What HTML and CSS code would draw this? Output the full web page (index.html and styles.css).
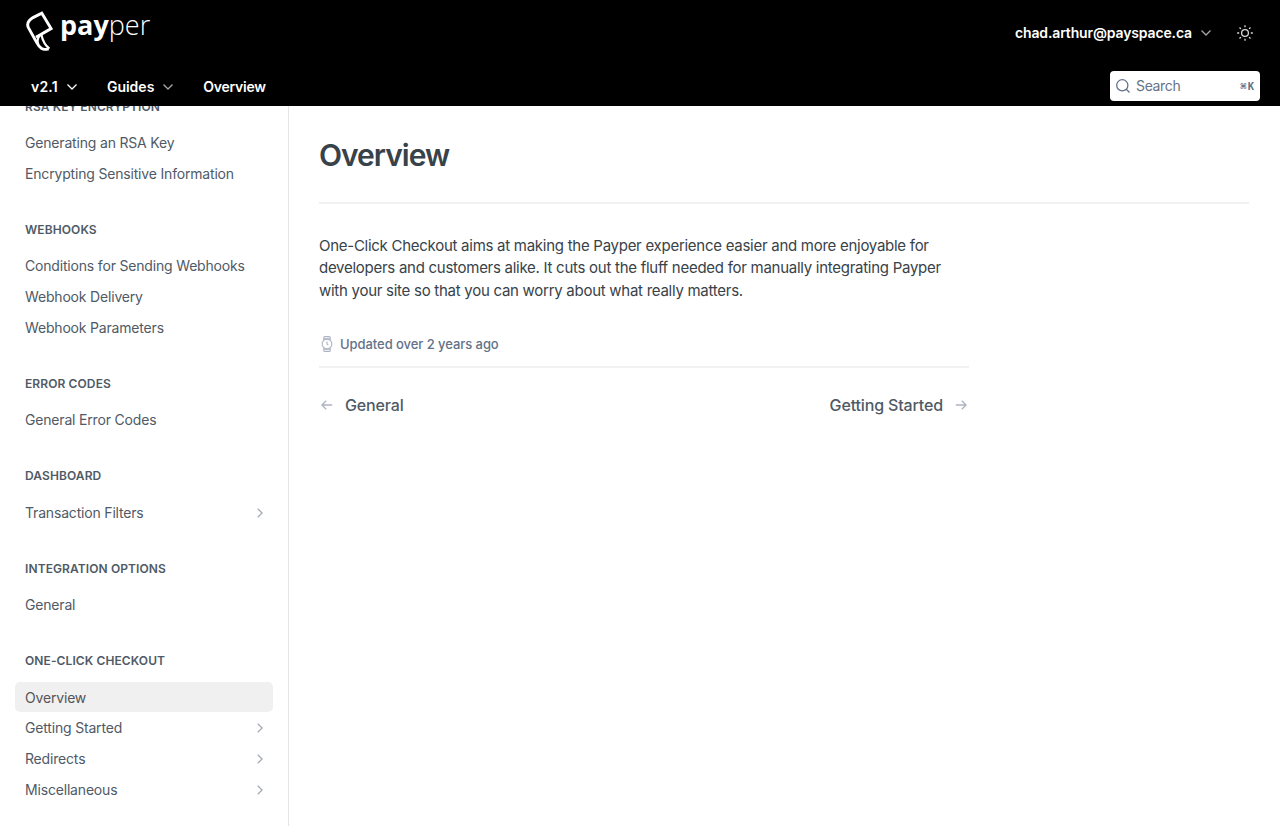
FILE: index.html
```
<!DOCTYPE html>
<html lang="en">
<head>
<meta charset="utf-8">
<title>Overview</title>
<link rel="stylesheet" href="styles.css">
</head>
<body>
<header class="header">
  <div class="top">
    <a class="logo">
      <svg width="28" height="42" viewBox="0 0 28 42" fill="none" stroke="#fff" stroke-width="2.9" stroke-linejoin="miter"><path d="M11 27.2 26.1 18.6 16.8 3.2 8 7.6C3.2 10.6 1.6 14 3.4 17.6L11.6 32.4C15 38.6 17.5 40.6 23.6 38.8"/><path d="M16.4 25C17.6 30 19.4 35 24.4 38.6M14.6 25.6C12.4 28.5 12 31.5 13.4 34.6" stroke-width="2.2"/></svg>
      <span class="wordmark"><b class="pay">pay</b><span class="per">per</span></span>
    </a>
    <div class="account">
      <span class="email">chad.arthur@payspace.ca</span>
      <svg class="chev dim" width="10" height="6" viewBox="0 0 10 6"><path d="m.5.5 4.5 4.5L9.5.5"/></svg>
      <svg class="sun" width="16" height="16" viewBox="0 0 16 16"><circle cx="8" cy="8" r="3.4"/><path d="M8 .2v2M8 13.8v2M.2 8h2M13.8 8h2M2.5 2.5 3.9 3.9M12.1 12.1l1.4 1.4M2.5 13.5l1.4-1.4M12.1 3.9l1.4-1.4"/></svg>
    </div>
  </div>
  <nav class="bar">
    <span class="tab version">v2.1 <svg class="chev" width="10" height="6" viewBox="0 0 10 6"><path d="m.5.5 4.5 4.5L9.5.5"/></svg></span>
    <span class="tab guides">Guides <svg class="chev dim" width="10" height="6" viewBox="0 0 10 6"><path d="m.5.5 4.5 4.5L9.5.5"/></svg></span>
    <span class="tab overview">Overview</span>
    <div class="search">
      <svg width="14" height="14" viewBox="0 0 14 14"><circle cx="6.3" cy="6.3" r="5.6"/><path d="m10.3 10.3 3.2 3.2"/></svg>
      <span class="hint">Search</span><span class="keys"><span class="cmd">⌘</span>K</span>
    </div>
  </nav>
</header>
<div class="page">
  <aside class="sidebar">
    <section class="group"><h2>RSA Key Encryption</h2><a>Generating an RSA Key</a><a>Encrypting Sensitive Information</a></section>
    <section class="group"><h2>Webhooks</h2><a>Conditions for Sending Webhooks</a><a>Webhook Delivery</a><a>Webhook Parameters</a></section>
    <section class="group"><h2>Error Codes</h2><a>General Error Codes</a></section>
    <section class="group"><h2>Dashboard</h2><a>Transaction Filters<svg class="more" width="6" height="10" viewBox="0 0 6 10"><path d="m.7.7L5.1 5 .7 9.3"/></svg></a></section>
    <section class="group"><h2>Integration Options</h2><a>General</a></section>
    <section class="group"><h2>One-Click Checkout</h2><a class="active">Overview</a><a>Getting Started<svg class="more" width="6" height="10" viewBox="0 0 6 10"><path d="m.7.7L5.1 5 .7 9.3"/></svg></a><a>Redirects<svg class="more" width="6" height="10" viewBox="0 0 6 10"><path d="m.7.7L5.1 5 .7 9.3"/></svg></a><a>Miscellaneous<svg class="more" width="6" height="10" viewBox="0 0 6 10"><path d="m.7.7L5.1 5 .7 9.3"/></svg></a></section>
  </aside>
  <main class="main">
    <h1>Overview</h1>
    <article class="article">
      <p>One-Click Checkout aims at making the Payper experience easier and more enjoyable for developers and customers alike. It cuts out the fluff needed for manually integrating Payper with your site so that you can worry about what really matters.</p>
      <div class="updated"><svg width="12" height="16" viewBox="0 0 12 16"><circle cx="6" cy="8" r="4.9"/><path d="M2.8 4V1.6Q2.8.6 3.8.6h4.4q1 0 1 1V4M2.8 12v2.4q0 1 1 1h4.4q1 0 1-1V12M3 2.8h6M3 13.2h6M6 5.5V8l1.3 1.2"/></svg>Updated over 2 years ago</div>
      <div class="pager">
        <a><svg width="12" height="10" viewBox="0 0 12 10"><path d="M11.2 5H1M5.2.7.9 5l4.3 4.3"/></svg>General</a>
        <a>Getting Started<svg width="12" height="10" viewBox="0 0 12 10"><path d="M.8 5H11M6.8.7 11.1 5 6.8 9.3"/></svg></a>
      </div>
    </article>
  </main>
</div>
</body>
</html>
```
FILE: styles.css
```
* { box-sizing: border-box; }
body { margin: 0; height: 826px; overflow: hidden; background: #fff; font-family: Inter, "Liberation Sans", sans-serif; display: flex; flex-direction: column; }
svg { flex: none; fill: none; stroke: currentColor; }
.header { background: #000; color: #fff; height: 106px; flex: none; }
.top { height: 66px; display: flex; justify-content: space-between; padding: 0 27px 0 25px; }
.logo { display: flex; align-items: flex-start; padding-top: 10px; gap: 7px; }
.wordmark { font-family: "Open Sans", sans-serif; font-size: 27px; line-height: 30px; }
.pay { font-weight: 700; }
.per { font-weight: 300; }
.account { display: flex; align-items: center; font-size: 14px; font-weight: 600; letter-spacing: -.14px; padding-bottom: 1px; }
.account .chev { margin: 0 26px 0 9px; }
.chev { stroke-width: 1.3; }
.dim { opacity: .65; }
.sun { stroke-width: 1.3; opacity: .85; }
.bar { height: 40px; display: flex; align-items: center; padding: 0 20px 0 31px; }
.tab { display: flex; align-items: center; gap: 9px; font-size: 14px; font-weight: 600; line-height: 20px; padding-top: 2px; margin-right: 30px; }
.version { letter-spacing: .2px; }
.overview { letter-spacing: -.25px; }
.search { width: 150px; height: 30px; margin-left: auto; border-radius: 4px; background: #fff; color: #637288; display: flex; align-items: center; gap: 6px; padding: 0 6px; font-size: 14px; letter-spacing: -.35px; }
.search svg { stroke-width: 1.3; }
.hint { padding-bottom: 1px; }
.keys { margin-left: auto; font: 700 10.5px "DejaVu Sans Mono", monospace; letter-spacing: 0; display: flex; align-items: center; gap: 1px; }
.page { display: flex; flex: 1; min-height: 0; }
.sidebar { width: 289px; flex: none; overflow: hidden; border-right: 1px solid #e3e5e8; padding: 0 15px; color: #4f5a66; }
.group { margin-bottom: 32.5px; }
.group:first-child { margin-top: -8.5px; }
.group h2 { margin: 0 0 12.3px; padding-left: 10px; font-size: 12px; line-height: 18px; font-weight: 600; letter-spacing: .1px; text-transform: uppercase; }
.group a { display: flex; align-items: center; justify-content: space-between; height: 29.7px; margin-bottom: 1px; padding: 0 10px; border-radius: 5px; font-size: 14px; letter-spacing: -.18px; }
.group .active { background: #f0f0f0; color: #555; }
.more { color: #a4abb4; stroke-width: 1.3; margin-top: 1px; }
.main { flex: 1; padding: 30px 31px 0 30px; color: #384248; }
.main h1 { margin: 0; height: 68px; border-bottom: 2px solid #f0f1f2; font-size: 30px; line-height: 39px; font-weight: 600; letter-spacing: -1px; }
.article { width: 650px; }
.article p { margin: 30.8px 0 0; font-size: 15px; line-height: 22.5px; letter-spacing: -.27px; }
.updated { display: flex; align-items: center; gap: 7px; height: 46px; margin-top: 19.7px; padding: 0 0 0 2px; border-bottom: 2px solid #f0f1f2; color: #637288; font-size: 13px; font-weight: 500; letter-spacing: -.06px; }
.updated svg { color: #adb4c1; stroke-width: 1.1; }
.pager { display: flex; justify-content: space-between; padding: 25px 2px 0; color: #4f5a66; font-size: 16px; font-weight: 500; line-height: 24px; letter-spacing: -.15px; }
.pager a { display: flex; align-items: center; gap: 12px; }
.pager svg { color: #adb4c1; stroke-width: 1.3; }
```
